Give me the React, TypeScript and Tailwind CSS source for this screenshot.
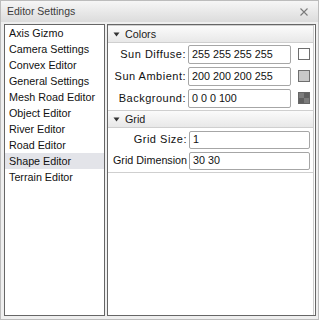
import { useState } from 'react';

const editors = [
  'Axis Gizmo',
  'Camera Settings',
  'Convex Editor',
  'General Settings',
  'Mesh Road Editor',
  'Object Editor',
  'River Editor',
  'Road Editor',
  'Shape Editor',
  'Terrain Editor',
];

const colorRows = [
  { label: 'Sun Diffuse:', value: '255 255 255 255', swatch: 'white' },
  { label: 'Sun Ambient:', value: '200 200 200 255', swatch: 'gray' },
  { label: 'Background:', value: '0 0 0 100', swatch: 'alpha' },
];

function SectionHeader({ title }: { title: string }) {
  return (
    <div className="flex h-[18px] items-center border-y border-[#cfcfcf] bg-gradient-to-b from-[#fbfbfb] to-[#e8e8e8] pl-[5px]">
      <svg width="7" height="5" viewBox="0 0 7 5" className="mr-[5px]">
        <path d="M0.5 0.5 L6.5 0.5 L3.5 4.5 Z" fill="#333" />
      </svg>
      <span className="text-[10.75px] text-[#1a1a1a]">{title}</span>
    </div>
  );
}

function Swatch({ kind }: { kind: string }) {
  if (kind === 'alpha') {
    return (
      <div className="grid h-[12px] w-[12px] grid-cols-2 grid-rows-2 border border-[#666]">
        <div className="bg-[#7c7c7c]" />
        <div className="bg-[#606060]" />
        <div className="bg-[#606060]" />
        <div className="bg-[#7c7c7c]" />
      </div>
    );
  }
  return (
    <div
      className={
        kind === 'white'
          ? 'h-[12px] w-[12px] border border-[#6e6e6e] bg-white'
          : 'h-[12px] w-[12px] border border-[#6e6e6e] bg-[#c8c8c8]'
      }
    />
  );
}

export default function App() {
  const [selected, setSelected] = useState('Shape Editor');

  return (
    <div
      className="flex h-[320px] w-[319px] flex-col border border-[#bcbcbc] bg-[#efefef] leading-none"
      style={{ fontFamily: '"Liberation Sans", Arial, sans-serif' }}
    >
      {/* Title bar */}
      <div className="flex h-[21px] shrink-0 items-center justify-between bg-gradient-to-b from-[#f6f6f6] to-[#dcdcdc] pl-[6px] pr-[10px]">
        <span className="text-[10.5px] text-[#3c3c3c]">Editor Settings</span>
        <svg width="8" height="8" viewBox="0 0 8 8">
          <path d="M0.5 0.5 L7.5 7.5 M7.5 0.5 L0.5 7.5" stroke="#7a7a7a" strokeWidth="1.1" />
        </svg>
      </div>

      <div className="flex min-h-0 flex-1 gap-[2px] pb-[3px] pl-[3px] pr-[2px] pt-[2px]">
        {/* Editor list */}
        <div className="w-[101px] shrink-0 border border-[#666] bg-white text-[10.75px]">
          {editors.map((name) => (
            <div
              key={name}
              onClick={() => setSelected(name)}
              className={
                name === selected
                  ? 'flex h-[16px] items-center bg-[#e3e4e9] pl-[4px] text-[#111]'
                  : 'flex h-[16px] items-center pl-[4px] text-[#111]'
              }
            >
              {name}
            </div>
          ))}
        </div>

        {/* Settings */}
        <div className="flex-1 border border-[#666] bg-white pr-[1px]">
          <div className="h-full border-r border-[#cdcdcd]">
            <SectionHeader title="Colors" />
            <div className="pb-[1px]">
              {colorRows.map((row) => (
                <div key={row.label} className="flex h-[22px] items-center">
                  <div className="w-[78px] shrink-0 text-right text-[11px] tracking-[0.5px] text-[#111]">
                    {row.label}
                  </div>
                  <div className="ml-[2px] flex h-[19px] w-[103px] items-center rounded-[2px] border border-[#a6a6a6] pl-[3px] text-[10.75px] text-[#111]">
                    {row.value}
                  </div>
                  <div className="ml-[7px]">
                    <Swatch kind={row.swatch} />
                  </div>
                </div>
              ))}
            </div>
            <SectionHeader title="Grid" />
            <div className="border-b border-[#cfcfcf] pb-[1px] pt-[1px]">
              <div className="flex h-[21px] items-center">
                <div className="w-[79px] shrink-0 text-right text-[11px] tracking-[0.5px] text-[#111]">
                  Grid Size:
                </div>
                <div className="ml-[2px] mr-[3px] flex h-[18px] flex-1 items-center rounded-[2px] border border-[#a6a6a6] pl-[3px] text-[10.75px] text-[#111]">
                  1
                </div>
              </div>
              <div className="flex h-[21px] items-center">
                <div className="w-[79px] shrink-0 overflow-hidden whitespace-nowrap pl-[5px] text-[10.75px] text-[#111]">
                  Grid Dimension
                </div>
                <div className="ml-[2px] mr-[3px] flex h-[18px] flex-1 items-center rounded-[2px] border border-[#a6a6a6] pl-[3px] text-[10.75px] text-[#111]">
                  30 30
                </div>
              </div>
            </div>
          </div>
        </div>
      </div>
    </div>
  );
}
